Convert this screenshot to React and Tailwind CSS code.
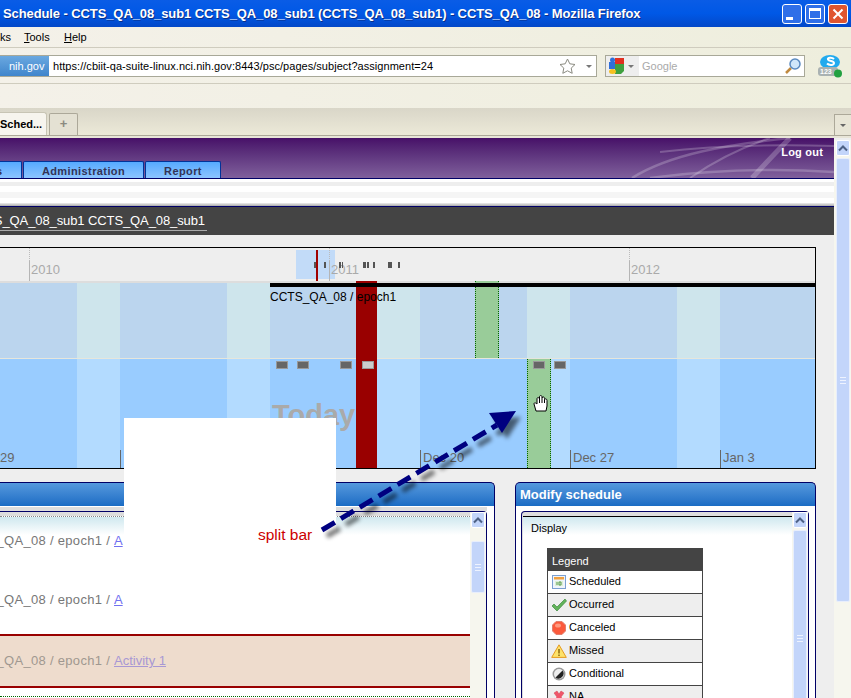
const LIGHT_W = 43;
const STRIPES = [
  [77, 0], [LIGHT_W, 1], [107, 0], [LIGHT_W, 1], [107, 0], [LIGHT_W, 1],
  [107, 0], [LIGHT_W, 1], [107, 0], [LIGHT_W, 1], [95, 0],
];
const OVERVIEW_MARKS = [[314, 4], [324, 2], [339, 2], [342, 1], [363, 3], [367, 2], [373, 2], [388, 4], [398, 2]];
const EVENTS = [[276, 0], [297, 0], [340, 0], [362, 1], [533, 0], [554, 0]];

function Stripes({ height, dark, light }) {
  return (
    <div className="flex" style={{ height }}>
      {STRIPES.map(([w, isLight], i) => (
        <div key={i} style={{ width: w, background: isLight ? light : dark }} />
      ))}
    </div>
  );
}

function ScrollButton() {
  return (
    <div className="h-[16px] w-[14px] rounded-[2px] border border-white bg-[#c3d5fa] flex items-center justify-center shrink-0">
      <svg width="10" height="7" viewBox="0 0 10 7"><path d="M1 5.500 5 1.500 9 5.500" fill="none" stroke="#4d6185" strokeWidth="2" /></svg>
    </div>
  );
}

function Scrollbar({ thumbGap, thumbHeight, width = "w-[16px]", track = "bg-[#f6f6ee]" }) {
  return (
    <div className={`${width} ${track} shrink-0 flex flex-col items-center h-full`}>
      <ScrollButton />
      <div
        className="w-[14px] shrink-0 rounded-[2px] border border-[#e8eefc] bg-[#c3d5fa] flex items-center justify-center"
        style={{ marginTop: thumbGap, height: thumbHeight }}
      >
        <div className="w-[6px] h-[7px] border-y border-[#eef3ff] flex items-center"><div className="w-full h-px bg-[#eef3ff]" /></div>
      </div>
    </div>
  );
}

function CalendarIcon() {
  return (
    <svg width="14" height="14" viewBox="0 0 14 14">
      <rect x=".5" y=".5" width="13" height="13" fill="#eef4fb" stroke="#7b9fd0" />
      <rect x="2" y="2" width="10" height="2.500" fill="#f0a040" />
      <rect x="3" y="6" width="8" height="5" fill="#dcefd5" />
      <path d="M5 7v3M7 7h2v3H7z" fill="none" stroke="#5a9a50" />
    </svg>
  );
}
function CheckIcon() {
  return (
    <svg width="16" height="14" viewBox="0 0 16 14">
      <path d="M1 8l2-2 3 3 8-8 1.500 2L6 13z" fill="#62b35a" stroke="#3f8a40" strokeWidth=".7" />
    </svg>
  );
}
function StopIcon() {
  return (
    <svg width="14" height="14" viewBox="0 0 14 14">
      <path d="M4 .5h6L13.500 4v6L10 13.500H4L.5 10V4z" fill="#fb5a3c" stroke="#e08070" />
      <ellipse cx="6" cy="4.500" rx="3" ry="2" fill="#ff9a80" />
    </svg>
  );
}
function WarnIcon() {
  return (
    <svg width="16" height="14" viewBox="0 0 16 14">
      <path d="M8 .8 15.300 13.400H.7z" fill="#fde26a" stroke="#e59a20" />
      <path d="M8 5v4.500M8 10.500v1.500" stroke="#8a6a10" strokeWidth="1.500" />
    </svg>
  );
}
function ConditionalIcon() {
  return (
    <svg width="14" height="14" viewBox="0 0 14 14">
      <circle cx="7" cy="7" r="6.500" fill="#999" />
      <circle cx="7" cy="7" r="5" fill="#eee" />
      <path d="M3.500 10.500 10.500 3.500A5 5 0 0 1 3.500 10.500z" fill="#222" />
    </svg>
  );
}
function CrossIcon() {
  return (
    <svg width="14" height="14" viewBox="0 0 14 14">
      <path d="M2 3l3-2 2 3 2-3 3 2-3 4 3 4-3 2-2-3-2 3-3-2 3-4z" fill="#f0566a" stroke="#d04050" strokeWidth=".5" />
    </svg>
  );
}

const LEGEND = [
  ["Scheduled", CalendarIcon],
  ["Occurred", CheckIcon],
  ["Canceled", StopIcon],
  ["Missed", WarnIcon],
  ["Conditional", ConditionalIcon],
  ["NA", CrossIcon],
];

function Legend() {
  return (
    <div className="ml-[24px] mt-[13px] w-[156px] border-x border-[#444]">
      <div className="h-[23px] -mx-px bg-[#444] text-white text-[11px] pl-[5px] pt-[6px] leading-[14px]">Legend</div>
      {LEGEND.map(([label, Icon], i) => (
        <div key={label} className={`h-[23px] border-b border-[#444] flex items-center ${i % 2 ? "bg-[#eee]" : "bg-white"}`}>
          <div className="w-[21px] flex justify-center shrink-0 pl-[1px]"><Icon /></div>
          <span className="text-[11px] text-black pb-[1px]">{label}</span>
        </div>
      ))}
    </div>
  );
}

function TitleButton({ children, className }) {
  return (
    <div className={`w-[20px] h-[20px] rounded-[3px] border border-white flex items-center justify-center ${className}`}>
      {children}
    </div>
  );
}

function Header() {
  return (
    <div className="relative h-[40px] bg-linear-to-b from-[#470f68] to-[#80609c] border-b border-[#000066] box-content">
      <svg className="absolute inset-0" width="834" height="40" viewBox="0 0 834 40">
        <g fill="none" stroke="#fff" strokeOpacity=".22">
          <path d="M632 40C670 16 730 6 790 0" strokeWidth="2.500" />
          <path d="M660 14C710 8 770 6 834 8" strokeWidth="2" />
          <path d="M690 40C710 26 740 10 770 0" strokeWidth="2" />
          <path d="M650 40C710 32 770 30 834 34" strokeWidth="2.500" />
          <path d="M752 40C765 26 778 12 790 0" strokeWidth="5" />
        </g>
      </svg>
      <div className="absolute right-[11px] top-[7px] text-white font-bold text-[11px] leading-[14px] tracking-[0.2px]">Log out</div>
      <div className="absolute left-0 bottom-0 flex items-end gap-px h-[17px]">
        <div className="w-[22px] h-[17px] rounded-tr-[2px] border-r border-t border-[#003399] bg-linear-to-b from-[#55aaff] to-[#8cc4ff] text-[#333355] font-bold text-[11px] leading-[18px] overflow-hidden">
          <span className="ml-[-4px] inline-block">s</span>
        </div>
        {[["Administration", "w-[121px]"], ["Report", "w-[76px]"]].map(([label, w]) => (
          <div key={label} className={`${w} h-[17px] rounded-t-[2px] border-x border-t border-[#003399] bg-linear-to-b from-[#55aaff] to-[#8cc4ff] text-[#333355] font-bold text-[11px] leading-[18px] tracking-[0.4px] text-center`}>
            {label}
          </div>
        ))}
      </div>
    </div>
  );
}

function Timeline() {
  return (
    <div className="relative mt-[12px] w-[816px] h-[222px] border-t border-b border-r border-black bg-[#eee] overflow-hidden box-border">
      <div className="h-[33px]" />
      <div className="h-[2px] bg-[#ddd]" />
      <Stripes height={75} dark="#bbd5ee" light="#cee5ec" />
      <div className="h-px bg-[#e6e6dc]" />
      <Stripes height={109} dark="#99ccff" light="#b3dbff" />

      {/* overview */}
      <div className="absolute left-[296px] top-[2px] w-[39px] h-[29px] bg-[#c2dbf8]" />
      {[[29, "2010"], [329, "2011"], [629, "2012"]].map(([x, year]) => (
        <div key={year}>
          <div className="absolute top-0 h-[13px] border-l border-dotted border-[#bbb]" style={{ left: x }} />
          <div className="absolute top-[13px] h-[20px] w-px bg-[#b5b5b5]" style={{ left: x }} />
          <div className="absolute top-[14px] text-[13px] leading-[16px] text-[#aaa]" style={{ left: x + 2 }}>{year}</div>
        </div>
      ))}
      {OVERVIEW_MARKS.map(([x, w]) => (
        <div key={x} className="absolute top-[14px] h-[6px] bg-[#555]" style={{ left: x, width: w }} />
      ))}
      <div className="absolute left-[316px] top-[2px] w-[2px] h-[31px] bg-[#a00000]" />

      {/* bars */}
      <div className="absolute left-[356px] top-[33px] w-[21px] h-[187px] bg-[#990000]" />
      <div className="absolute left-[475px] top-[33px] w-[24px] h-[77px] bg-[#99cc99] border-x border-dotted border-[#006600]" />
      <div className="absolute left-[527px] top-[111px] w-[24px] h-[109px] bg-[#99cc99] border-x border-dotted border-[#006600]" />
      <div className="absolute left-[270px] top-[35px] right-0 h-[4px] bg-black" />
      <div className="absolute left-[270px] top-[42px] text-[12px] leading-[14px] text-black">CCTS_QA_08 / epoch1</div>

      {EVENTS.map(([x, pale]) => (
        <div key={x} className={`absolute top-[113px] w-[12px] h-[8px] border border-[#999] ${pale ? "bg-[#ccc]" : "bg-[#666]"}`} style={{ left: x }} />
      ))}

      <div className="absolute left-[272px] top-[150px] text-[29px] leading-[34px] font-bold text-[#aaa]">Today</div>

      {[[0, "29"], [120, ""], [420, "Dec 20"], [570, "Dec 27"], [720, "Jan 3"]].map(([x, label]) => (
        <div key={x}>
          {x > 0 && <div className="absolute top-[202px] h-[18px] w-px bg-[#666]" style={{ left: x }} />}
          <div className="absolute top-[203px] text-[13px] leading-[14px] text-[#666]" style={{ left: x > 0 ? x + 3 : 0 }}>{label}</div>
        </div>
      ))}
    </div>
  );
}

function RowText({ link, mute }) {
  return (
    <div className={`h-[29px] w-full flex items-center text-[13px] ${mute ? "text-[#a09890]" : "text-[#777]"}`}>
      <div className="w-[114px] flex justify-end overflow-hidden shrink-0">
        <span className="whitespace-pre shrink-0 tracking-[0.3px]">_QA_08 / epoch1 / </span>
      </div>
      <a className={`underline ${mute ? "text-[#a898d4]" : "text-[#7070f0]"}`}>{link}</a>
    </div>
  );
}

function PanelHeader({ className, children }) {
  return (
    <div className={`h-[24px] bg-linear-to-b from-[#5599dd] to-[#1a6cc4] border-t border-x border-[#000066] text-white font-bold text-[13px] leading-[23px] pl-[4px] ${className}`}>
      {children}
    </div>
  );
}

function Panels() {
  return (
    <div className="flex mt-[13px] items-start">
      <div className="w-[495px] shrink-0">
        <PanelHeader className="rounded-tr-[5px] border-l-0" />
        <div className="h-[192px] bg-white border-r border-[#000066] pt-px pr-[7px]">
          <div className="h-[4px] bg-[#ddd]" />
          <div className="h-[187px] border-t border-r border-[#000066] rounded-tr-[4px] flex bg-[#ddd]">
            <div className="flex-1 mt-[4px] bg-white border-t border-dotted border-[#888] relative overflow-hidden">
              <div className="h-[18px] bg-linear-to-b from-[#cfe8ef] to-white absolute inset-x-0 top-0" />
              <div className="relative pt-[9px]">
                <RowText link="A" />
                <div className="mt-[30px]"><RowText link="A" /></div>
                <div className="mt-[20px] h-[54px] bg-[#eedccd] border-y-2 border-[#990000] flex items-center">
                  <RowText link="Activity 1" mute />
                </div>
                <div className="mt-[8px] border-t border-dotted border-[#006600]" />
              </div>
            </div>
            <Scrollbar thumbGap={13} thumbHeight={52} />
          </div>
        </div>
      </div>

      <div className="w-[301px] shrink-0 ml-[20px]">
        <PanelHeader className="rounded-t-[5px]">Modify schedule</PanelHeader>
        <div className="h-[192px] bg-white border-x border-[#000066] pl-[5px] pr-[6px] pt-[5px]">
          <div className="h-[187px] border-t border-x border-[#000066] rounded-t-[4px] flex bg-[#ddd] pl-px">
            <div className="flex-1 mt-[4px] bg-white border-t border-black relative overflow-hidden">
              <div className="h-[18px] bg-linear-to-b from-[#cfe8ef] to-white absolute inset-x-0 top-0" />
              <div className="relative">
                <div className="pl-[8px] pt-[5px] text-[11px] leading-[13px] text-black">Display</div>
                <Legend />
              </div>
            </div>
            <Scrollbar thumbGap={2} thumbHeight={216} />
          </div>
        </div>
      </div>
    </div>
  );
}

function BrowserChrome() {
  return (
    <>
      <div className="h-[27px] bg-linear-to-b from-[#0a5ce6] via-[#0058e6] to-[#0348c8] flex items-center pl-[3px] pr-[3px]">
        <div className="flex-1 text-white font-bold text-[13px] tracking-[-0.1px] whitespace-nowrap [text-shadow:1px_1px_#0b2f88]">
          Schedule - CCTS_QA_08_sub1 CCTS_QA_08_sub1 (CCTS_QA_08_sub1) - CCTS_QA_08 - Mozilla Firefox
        </div>
        <div className="flex gap-[3px]">
          <TitleButton className="bg-[#2f6fe8]"><div className="w-[7px] h-[3px] bg-white mt-[9px] mr-[5px]" /></TitleButton>
          <TitleButton className="bg-[#2f6fe8]"><div className="w-[12px] h-[11px] border border-white border-t-[3px]" /></TitleButton>
          <TitleButton className="bg-[#e0552f]">
            <svg width="12" height="12" viewBox="0 0 12 12"><path d="M1.500 1.500l9 9M10.500 1.500l-9 9" stroke="#fff" strokeWidth="2" /></svg>
          </TitleButton>
        </div>
      </div>

      <div className="h-[20px] bg-linear-to-r from-[#f4f1e9] to-[#eeeedd] flex items-center text-[11px] text-black">
        <span className="w-[24px] overflow-hidden">ks</span>
        <span className="w-[40px]"><u>T</u>ools</span>
        <span><u>H</u>elp</span>
      </div>

      <div className="h-[37px] bg-linear-to-r from-[#f4f1e9] to-[#eeeedd] border-y border-[#cfccbe] flex items-center pt-[1px]">
        <div className="w-[597px] h-[22px] border border-[#a8a898] bg-white flex items-center border-l-0">
          <div className="w-[49px] h-full bg-linear-to-b from-[#6aa8e0] to-[#3f85cc] text-white text-[11px] leading-[20px] pl-[9px] shrink-0">nih.gov</div>
          <span className="pl-[4px] text-[11px] tracking-[0.04px] text-black whitespace-nowrap flex-1">https://cbiit-qa-suite-linux.nci.nih.gov:8443/psc/pages/subject?assignment=24</span>
          <svg className="mr-[10px]" width="17" height="16" viewBox="0 0 17 16"><path d="M8.500 1l2.300 4.800 5.200.7-3.800 3.600 1 5.200-4.700-2.500-4.700 2.500 1-5.200L1 6.500l5.200-.7z" fill="#fff" stroke="#8a8a80" /></svg>
          <div className="w-0 h-0 border-x-[3px] border-x-transparent border-t-[3px] border-t-[#777] mr-[4px]" />
        </div>
        <div className="ml-[8px] w-[200px] h-[22px] border border-[#a8a898] bg-white flex items-center">
          <div className="w-[33px] h-full bg-[#eee] flex items-center pl-[3px] shrink-0">
            <svg width="16" height="18" viewBox="0 0 16 18">
              <rect x="0" y="5" width="6" height="7" fill="#2f6fd8" />
              <circle cx="3.500" cy="3" r="2.500" fill="#2f6fd8" />
              <rect x="6" y="1" width="9" height="6" fill="#e03020" />
              <path d="M6 7h9v7l-3 3H6z" fill="#3fa03f" />
              <ellipse cx="3.500" cy="14.500" rx="3.500" ry="2.500" fill="#f5c020" />
            </svg>
            <div className="ml-[3px] w-0 h-0 border-x-[3px] border-x-transparent border-t-[3px] border-t-[#777]" />
          </div>
          <span className="pl-[3px] text-[11px] text-[#aaa] flex-1">Google</span>
          <svg className="mr-[2px]" width="18" height="18" viewBox="0 0 18 18">
            <path d="M2 16l5-5" stroke="#c08a40" strokeWidth="2.500" />
            <circle cx="11" cy="7" r="5" fill="#cfe6fa" stroke="#5a8ac0" strokeWidth="1.500" />
          </svg>
        </div>
        <svg className="ml-[13px]" width="24" height="24" viewBox="0 0 24 24">
          <ellipse cx="12" cy="8" rx="10" ry="7" fill="#22aaee" />
          <path d="M16 5c-2-2-7-1.500-6 .5s6 1 6 3.500-5 2.500-7 .5" fill="none" stroke="#fff" strokeWidth="2" />
          <rect x="0" y="13" width="20" height="9" rx="3" fill="#aab2b2" />
          <text x="2" y="20" fontSize="7" fontWeight="bold" fill="#fff">123</text>
          <circle cx="20" cy="19.500" r="4" fill="#22a040" />
        </svg>
      </div>

      <div className="h-[24px] bg-linear-to-r from-[#f4f1e9] to-[#eeeedd]" />

      <div className="h-[28px] bg-linear-to-b from-[#d9d6c8] to-[#ece9d8] border-b border-[#aca899] flex items-end">
        <div className="w-[47px] h-[23px] bg-[#f7f5ee] rounded-tr-[3px] border-r border-t border-[#c8c5b5] text-[11px] font-bold text-black leading-[22px] text-right pr-[4px]">Sched...</div>
        <div className="ml-[2px] w-[29px] h-[22px] bg-[#e4e1d3] rounded-t-[2px] border-x border-t border-[#aca899] text-[#8a8a80] text-[13px] font-bold text-center leading-[20px]">+</div>
        <div className="flex-1" />
        <div className="w-[17px] h-[21px] border-l border-t border-[#aca899] bg-[#e8e5d6] flex items-center justify-center">
          <div className="w-0 h-0 border-x-[3px] border-x-transparent border-t-[3px] border-t-[#666]" />
        </div>
      </div>
    </>
  );
}

export default function App() {
  return (
    <div className="relative w-[851px] h-[698px] overflow-hidden bg-[#eee] font-['Liberation_Sans',Arial,sans-serif]">
      <BrowserChrome />
      <div className="h-[2px] bg-[#e8e5d8]" />
      <div className="flex h-[560px]">
        <div className="w-[834px] shrink-0 overflow-hidden">
          <Header />
          <div className="h-[24px] bg-white flex flex-col">
            <div className="h-[3px]" />
            <div className="h-[4px] bg-[#eee]" />
            <div className="h-[6px]" />
            <div className="h-[6px] bg-[#f5f5f5]" />
            <div className="h-[5px]" />
          </div>
          <div className="h-[3px] bg-linear-to-b from-[#eee] to-[#aaa]" />
          <div className="h-[29px] bg-[#444] border-t border-[#000066] flex items-start">
            <div className="w-[207px] flex justify-end overflow-hidden pt-[5px]">
              <span className="shrink-0 whitespace-nowrap text-white text-[13px] tracking-[-0.1px] leading-[18px] border-b border-[#aaa] pr-[2px]">CCTS_QA_08_sub1 CCTS_QA_08_sub1</span>
            </div>
          </div>
          <Timeline />
          <Panels />
        </div>
        <div className="w-[17px] pt-[2px] bg-[#eee]">
          <Scrollbar thumbGap={2} thumbHeight={444} width="w-[17px]" />
        </div>
      </div>

      {/* annotation pasted over the capture */}
      <div className="absolute left-[124px] top-[418px] w-[212px] h-[192px] bg-white" />
      <div className="absolute left-[258px] top-[526px] text-[15.5px] leading-[18px] text-[#cc0000]">split bar</div>
      <svg className="absolute inset-0 pointer-events-none" width="851" height="698" viewBox="0 0 851 698">
        <defs><filter id="blur"><feGaussianBlur stdDeviation="2" /></filter></defs>
        <g filter="url(#blur)" opacity=".55">
          <path d="M327 536 502 431" stroke="#000" strokeWidth="5" strokeDasharray="15 7" />
          <path d="M521 417 494 419 507 439z" fill="#000" />
        </g>
        <path d="M322 530 497 425" stroke="#000080" strokeWidth="5" strokeDasharray="15 7" />
        <path d="M516 411 489 413 502 433z" fill="#000080" />
      </svg>
      <svg className="absolute left-[533px] top-[395px]" width="16" height="17" viewBox="0 0 16 17">
        <path d="M3 16 1 9c0-2 2-1 3 0V4c0-2 2-2 2.500 0V2c0-2 2.500-2 2.500 0v1c.5-1.500 2.500-1.500 2.500 .5v1c.5-1 2.500-1 2.500 1V11l-1 5z" fill="#fff" stroke="#000" strokeWidth="1" />
        <path d="M6.500 4v4M9 3v5M11.500 4.500V8" stroke="#000" strokeWidth="1" />
      </svg>
    </div>
  );
}
